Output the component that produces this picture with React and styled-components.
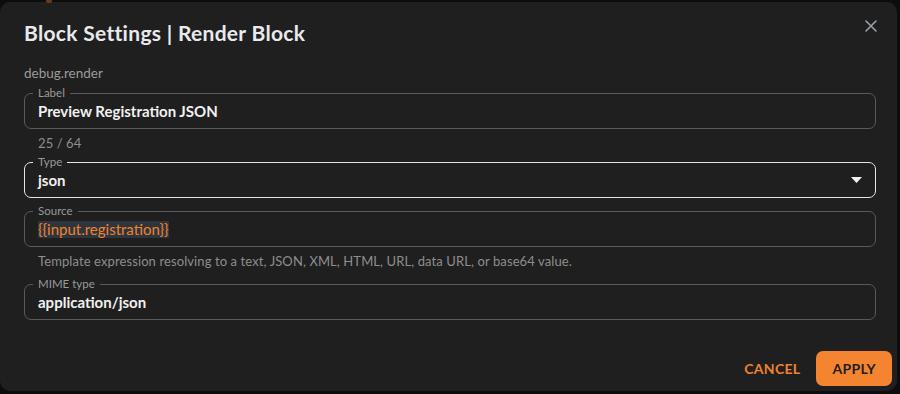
import React from 'react'
import styled, { createGlobalStyle } from 'styled-components'

const GlobalStyle = createGlobalStyle`
  html, body {
    margin: 0;
    padding: 0;
    background: #0d0d0d;
    font-family: Lato, "Open Sans", sans-serif;
  }
`

const Page = styled.div`
  width: 900px;
  height: 394px;
  padding-top: 2px;
  box-sizing: border-box;
  position: relative;
  overflow: hidden;
`

const Peek = styled.div`
  position: absolute;
  left: 46px;
  top: 0;
  width: 6px;
  height: 3px;
  background: #6b3a17;
  border-radius: 0 0 2px 2px;
`

const Dialog = styled.div`
  width: 897px;
  height: 389px;
  background: #1f1f1f;
  border-radius: 10px;
  display: flex;
  flex-direction: column;
  box-sizing: border-box;
`

const Header = styled.div`
  display: flex;
  justify-content: space-between;
  align-items: flex-start;
  padding: 16px 18px 0 24px;
`

const Title = styled.h2`
  margin: 0;
  font-size: 21px;
  line-height: 29px;
  font-weight: 700;
  color: #e9eaee;
  letter-spacing: 0.3px;
`

const CloseBtn = styled.button`
  background: none;
  border: 0;
  padding: 0;
  width: 16px;
  height: 16px;
  margin-top: 0;
  display: flex;
  align-items: center;
  justify-content: center;
  color: #9aa0a8;
  cursor: pointer;
`

const Content = styled.div`
  padding: 18px 21px 0 24px;
  display: flex;
  flex-direction: column;
`

const Key = styled.div`
  font-size: 13.5px;
  line-height: 16px;
  color: #9b9b9b;
`

const Box = styled.div`
  position: relative;
  height: 36px;
  margin-top: ${(p) => p.$mt}px;
  padding: 0 13px;
  box-sizing: border-box;
  border: 1px solid ${(p) => (p.$active ? '#e6e6e6' : '#5a5a5a')};
  border-radius: 7px;
  display: flex;
  align-items: center;
  justify-content: space-between;
`

const FloatLabel = styled.span`
  position: absolute;
  top: -8px;
  left: 8px;
  padding: 0 5px;
  background: #1f1f1f;
  font-size: 11.5px;
  line-height: 14px;
  color: #9a9a9a;
`

const Value = styled.span`
  font-size: 15px;
  font-weight: 700;
  color: #f1f1f1;
`

const Expr = styled.span`
  font-size: 15px;
  line-height: 17px;
  color: #f0822e;
  background: #2f353d;
`

const Helper = styled.div`
  font-size: 13px;
  line-height: 16px;
  letter-spacing: 0.1px;
  color: #8e8e8e;
  padding-left: 14px;
  margin-top: ${(p) => p.$mt}px;
`

const Actions = styled.div`
  margin-top: auto;
  display: flex;
  justify-content: flex-end;
  align-items: center;
  padding: 0 5px 5px 0;
`

const Button = styled.button`
  font-family: Lato, "Open Sans", sans-serif;
  font-size: 14px;
  font-weight: 700;
  letter-spacing: 0.3px;
  height: 35px;
  padding: 0 16px;
  border: 0;
  border-radius: 7px;
  cursor: pointer;
  background: ${(p) => (p.$primary ? '#f58430' : 'transparent')};
  color: ${(p) => (p.$primary ? '#1e1e1e' : '#f0822e')};
`

const Caret = () => (
  <svg width="11" height="6" viewBox="0 0 11 6">
    <path d="M0 0 L11 0 L5.5 6 Z" fill="#f2f2f2" />
  </svg>
)

const App = () => {
  return (
    <>
      <GlobalStyle />
      <Page>
        <Peek />
        <Dialog>
          <Header>
            <Title>Block Settings | Render Block</Title>
            <CloseBtn>
              <svg width="12" height="12" viewBox="0 0 12 12">
                <path d="M1 1 L11 11 M11 1 L1 11" stroke="currentColor" strokeWidth="1.6" strokeLinecap="round" />
              </svg>
            </CloseBtn>
          </Header>
          <Content>
            <Key>debug.render</Key>
            <Box $mt={12}>
              <FloatLabel>Label</FloatLabel>
              <Value>Preview Registration JSON</Value>
            </Box>
            <Helper $mt={6}>25 / 64</Helper>
            <Box $mt={11} $active>
              <FloatLabel>Type</FloatLabel>
              <Value>json</Value>
              <Caret />
            </Box>
            <Box $mt={13}>
              <FloatLabel>Source</FloatLabel>
              <Expr>{'{{input.registration}}'}</Expr>
            </Box>
            <Helper $mt={6}>
              Template expression resolving to a text, JSON, XML, HTML, URL, data URL, or base64 value.
            </Helper>
            <Box $mt={15}>
              <FloatLabel>MIME type</FloatLabel>
              <Value>application/json</Value>
            </Box>
          </Content>
          <Actions>
            <Button>CANCEL</Button>
            <Button $primary>APPLY</Button>
          </Actions>
        </Dialog>
      </Page>
    </>
  )
}

export default App
